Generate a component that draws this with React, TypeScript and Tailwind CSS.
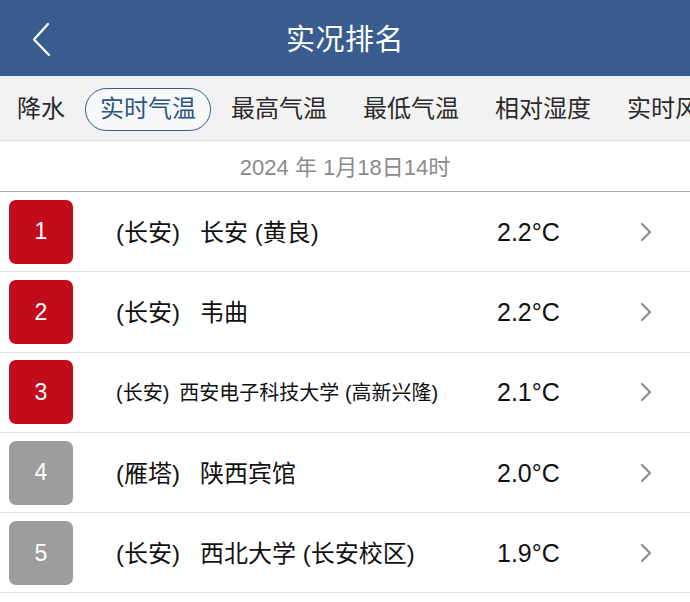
const tabs = ['降水', '实时气温', '最高气温', '最低气温', '相对湿度', '实时风速'];

type Row = { rank: number; area: string; name: string; temp: string; small?: boolean };

const rows: Row[] = [
  { rank: 1, area: '(长安)', name: '长安 (黄良)', temp: '2.2°C' },
  { rank: 2, area: '(长安)', name: '韦曲', temp: '2.2°C' },
  { rank: 3, area: '(长安)', name: '西安电子科技大学 (高新兴隆)', temp: '2.1°C', small: true },
  { rank: 4, area: '(雁塔)', name: '陕西宾馆', temp: '2.0°C' },
  { rank: 5, area: '(长安)', name: '西北大学 (长安校区)', temp: '1.9°C' },
];

const font = { fontFamily: '"Liberation Sans", "Noto Sans CJK SC", sans-serif' };

function ChevronRight() {
  return (
    <svg width="14" height="20" viewBox="0 0 14 20" fill="none">
      <path d="M3 2 L11 10 L3 18" stroke="#8c8c8c" strokeWidth="2.2" strokeLinecap="round" strokeLinejoin="round" />
    </svg>
  );
}

export default function App() {
  return (
    <div className="w-[690px] h-[602px] overflow-hidden bg-white text-[#111]" style={font}>
      {/* title bar */}
      <div className="relative h-[76px] bg-[#385d8e] flex items-center justify-center pt-[6px]">
        <svg className="absolute left-[31px] top-[22px]" width="20" height="36" viewBox="0 0 20 36" fill="none">
          <path d="M17 2 L3 17.5 L18 33" stroke="white" strokeWidth="2.2" strokeLinecap="round" strokeLinejoin="round" />
        </svg>
        <span className="text-white text-[29px] tracking-[0.5px]">实况排名</span>
      </div>

      {/* tabs */}
      <div className="h-[65px] bg-[#f2f2f2] border-b border-[#dcdcdc] flex items-center pl-[17px] gap-[20px] whitespace-nowrap overflow-hidden pt-[2px]">
        {tabs.map((t, i) =>
          i === 1 ? (
            <span
              key={t}
              className="h-[43px] px-[14px] rounded-full border-[1.5px] border-[#3b5b82] text-[#2f5683] text-[24px] flex items-center bg-[#f7f8f9]"
            >
              {t}
            </span>
          ) : (
            <span key={t} className={`text-[24px] text-[#2a2a2a] ${i === 0 ? '' : 'mr-[16px]'}`}>
              {t}
            </span>
          ),
        )}
      </div>

      {/* date */}
      <div className="h-[51px] flex items-center justify-center border-b border-[#a9a9a9] text-[#8a8a8a] text-[22px] pt-[2px]">
        2024 年 1月18日14时
      </div>

      {/* list */}
      {rows.map((r) => (
        <div key={r.rank} className="h-[80.3px] flex items-center border-b border-[#e4e4e4]">
          <div
            className={`ml-[9px] w-[64px] h-[64px] rounded-[7px] flex items-center justify-center text-white text-[23px] ${
              r.rank <= 3 ? 'bg-[#c10d1b]' : 'bg-[#9d9d9d]'
            }`}
          >
            {r.rank}
          </div>
          <div className={`ml-[43px] w-[381px] whitespace-nowrap pt-[2px] ${r.small ? 'text-[20px]' : 'text-[24px]'}`}>
            {r.area}
            <span className={r.small ? 'ml-[10px]' : 'ml-[20px]'}>{r.name}</span>
          </div>
          <div className="w-[142px] text-[25px] pt-[2px]">{r.temp}</div>
          <ChevronRight />
        </div>
      ))}
    </div>
  );
}
